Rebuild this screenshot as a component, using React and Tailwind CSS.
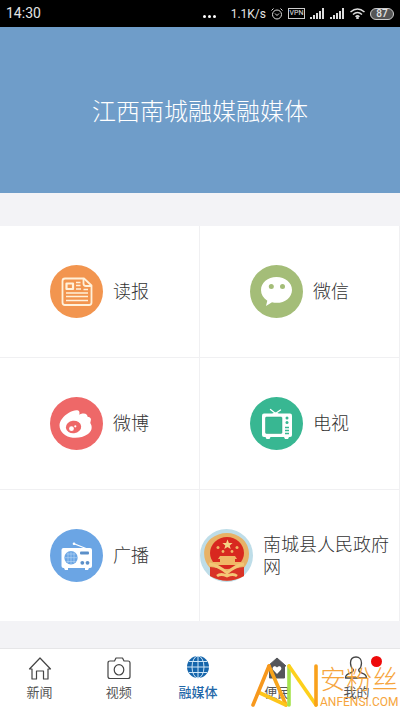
import React from 'react';

const fontStack = "font-[Roboto,'Noto_Sans_CJK_SC',sans-serif]";

function NewspaperIcon() {
  return (
    <svg viewBox="0 0 53 53" className="size-[53px] shrink-0" aria-hidden="true">
      <circle cx="26.5" cy="26.5" r="26.5" fill="#f2954f" />
      <g fill="none" stroke="#fff1da" strokeWidth="1.8" strokeLinejoin="round">
        <path d="M15 13.500h19l7.500 7v17q0 2.500-2.500 2.500H15q-2.500 0-2.500-2.500V16q0-2.500 2.500-2.500z" />
        <path d="M33.500 14v4.500q0 2.500 2.500 2.500h5.500" />
        <rect x="16.500" y="18.500" width="6.500" height="5.500" strokeWidth="2.200" />
        <path d="M26 17.500h4.500M26 20.500h4.500M26 24h5M33.500 24.500h4.500M16 28h22M16 31.500h22M16 35.500h22" strokeWidth="1.500" />
      </g>
    </svg>
  );
}

function WechatIcon() {
  return (
    <svg viewBox="0 0 53 53" className="size-[53px] shrink-0" aria-hidden="true">
      <circle cx="26.5" cy="26.5" r="26.5" fill="#a4bd78" />
      <path
        d="M26.500 12c-8.800 0-15.500 5.700-15.500 13 0 4.500 2.300 8.200 6.300 10.700l-1.300 5.300 6-3.800c1.500.4 3 .6 4.500.6 8.800 0 15.500-5.700 15.500-12.900S35.300 12 26.500 12z"
        fill="#fff"
      />
      <circle cx="21.300" cy="21.500" r="2.500" fill="#a4bd78" />
      <circle cx="32.500" cy="21.500" r="2.500" fill="#a4bd78" />
    </svg>
  );
}

function WeiboIcon() {
  return (
    <svg viewBox="0 0 53 53" className="size-[53px] shrink-0" aria-hidden="true">
      <circle cx="26.5" cy="26.5" r="26.5" fill="#ee6868" />
      <path
        d="M9.500 28.500c0-4.500 4-9.500 9-12.500 5-3 9.800-3.500 10.800-1.200.4 1 .3 2-.2 3 1.200-.8 3-1.500 4.700-1.300 2.300.2 3.700 1.500 3.800 3.300 3 .2 4 2 3 4.700-.3 1-.5 1.500.2 2.500 1.900 3.500.8 7.500-3.200 10.300-4 2.800-9.500 3.900-14.700 3.400C15.500 40 9.500 35 9.500 28.500z"
        fill="#fff"
      />
      <ellipse cx="23.500" cy="30" rx="7.700" ry="6.300" fill="#ee6868" transform="rotate(-6 23.500 30)" />
      <circle cx="21.500" cy="31.700" r="2.400" fill="#fff" />
      <circle cx="25.300" cy="29.300" r="1.100" fill="#fff" />
    </svg>
  );
}

function TvIcon() {
  return (
    <svg viewBox="0 0 53 53" className="size-[53px] shrink-0" aria-hidden="true">
      <circle cx="26.5" cy="26.5" r="26.5" fill="#38b792" />
      <path d="M20.500 12.500l5 4 5-3.500" fill="none" stroke="#fff" strokeWidth="1.300" strokeLinecap="round" />
      <path d="M22 17q3.500-3 7 0z" fill="#fff" />
      <rect x="12" y="16.500" width="30" height="23.500" rx="2" fill="#fff" />
      <path d="M15.500 40h5l-1 2h-3zM34 40h5l-1 2h-3z" fill="#fff" />
      <rect x="15.500" y="20" width="16.500" height="16.500" rx="1" fill="#38b792" stroke="#2a9c7b" strokeWidth="0.500" />
      <circle cx="37" cy="21" r="1.500" fill="#38b792" />
      <circle cx="37" cy="25.500" r="1.500" fill="#38b792" />
      <path d="M35 30.500h4M35 33.500h4M35 36.500h4" stroke="#38b792" strokeWidth="1.300" />
    </svg>
  );
}

function RadioIcon() {
  return (
    <svg viewBox="0 0 53 53" className="size-[53px] shrink-0" aria-hidden="true">
      <circle cx="26.5" cy="26.5" r="26.5" fill="#6ba5e4" />
      <path d="M23.500 14.500L36 19.500" stroke="#fff" strokeWidth="1.200" />
      <circle cx="24" cy="14.700" r="1.300" fill="#fff" />
      <rect x="11.500" y="19" width="30.500" height="20" rx="2" fill="#fff" />
      <path d="M14 39h4v2h-3zM35 39h4l-1 2h-3z" fill="#fff" />
      <circle cx="21" cy="28.700" r="6.700" fill="#6ba5e4" />
      <path d="M14.500 28.700h13M21 22.500v12.500M16.500 25h9M16.500 32.500h9M18 23.500v10.500M24 23.500v10.500" stroke="#b9d6f5" strokeWidth="0.600" />
      <rect x="30" y="22.500" width="9" height="3" rx="1" fill="#5b8fc9" />
      <circle cx="32.300" cy="33.800" r="1.900" fill="#5b8fc9" />
      <circle cx="37.500" cy="33.800" r="1.900" fill="#5b8fc9" />
    </svg>
  );
}

function EmblemIcon() {
  return (
    <svg viewBox="0 0 53 53" className="size-[53px] shrink-0" aria-hidden="true">
      <circle cx="26.5" cy="26.5" r="26.500" fill="#bedde8" />
      <path d="M10 47v-8C2 31 2 17 11 9.500 20 2 34 2 42 9.500c9 7.500 9 21.500 2 29.500v8q-17 9-34 0z" fill="#e8b266" />
      <ellipse cx="27" cy="24" rx="17" ry="16" fill="#d8281f" />
      <path d="M10 38q9 0 17 6 9-6 17-6v9q-17 9.500-34 0z" fill="#d93327" />
      <path d="M27.500 10.500l1.400 3.400 3.700.2-2.900 2.300 1 3.600-3.200-2-3.200 2 1-3.600-2.900-2.300 3.700-.2z" fill="#f5d486" />
      <g fill="#f0b766">
        <circle cx="18" cy="18.500" r="1.500" />
        <circle cx="37" cy="18.500" r="1.500" />
        <circle cx="23" cy="22.500" r="1.400" />
        <circle cx="32" cy="22.500" r="1.400" />
        <path d="M20 27h15l2 3h-2v3h7v3H13v-3h7v-3h-2z" />
      </g>
      <path d="M9 35q9 1 18 9 9-8 17-9M17 47q4-3 10 0 6-3 10 0" fill="none" stroke="#f3c676" strokeWidth="2.800" />
    </svg>
  );
}

function HomeIcon() {
  return (
    <svg viewBox="0 0 24 24" className="size-6" fill="none" stroke="#444" strokeWidth="1.200" strokeLinejoin="round" aria-hidden="true">
      <path d="M1.500 13L12 2l10.500 11H20v10h-4.500v-8h-7v8H4V13z" />
    </svg>
  );
}

function CameraIcon() {
  return (
    <svg viewBox="0 0 24 24" className="size-6" fill="none" stroke="#444" strokeWidth="1.200" strokeLinejoin="round" aria-hidden="true">
      <path d="M3 5h4.500L9 2h6.500L17 5h4q2 0 2 2v13.500q0 2-2 2H3q-2 0-2-2V7q0-2 2-2z" />
      <ellipse cx="12" cy="13.800" rx="4.800" ry="5.200" />
    </svg>
  );
}

function GlobeIcon() {
  return (
    <svg viewBox="0 0 24 24" className="size-6" aria-hidden="true">
      <circle cx="12" cy="11" r="11" fill="#1565ab" />
      <g fill="none" stroke="#cfe6f7" strokeWidth="1">
        <path d="M12 0v22M1 11h22M3 5.500h18M3 16.500h18" />
        <ellipse cx="12" cy="11" rx="6" ry="11" />
      </g>
    </svg>
  );
}

function ServiceIcon() {
  return (
    <svg viewBox="0 0 24 24" className="size-6" aria-hidden="true">
      <path d="M12 2l9 8h-1.500v12h-15V10H3z" fill="#54565a" stroke="#54565a" strokeLinejoin="round" />
      <path d="M12 18l-4-4.300c-1.500-2 1.500-5 4-2.200 2.500-2.800 5.500.2 4 2.200z" fill="#fff" />
    </svg>
  );
}

function UserIcon() {
  return (
    <svg viewBox="0 0 24 24" className="size-6" fill="none" stroke="#444" strokeWidth="1.300" strokeLinejoin="round" aria-hidden="true">
      <path d="M12 1C8.500 1 6.500 3.500 6.500 7c0 3 1.200 5.300 2.800 6.600.3 2-.8 2.700-3.300 3.600C3 18.300 1.500 19 1.500 22h21c0-3-1.500-3.700-4.500-4.800-2.500-.9-3.600-1.600-3.300-3.600C16.300 12.300 17.500 10 17.500 7c0-3.500-2-6-5.500-6z" />
    </svg>
  );
}

const services = [
  { label: '读报', Icon: NewspaperIcon },
  { label: '微信', Icon: WechatIcon },
  { label: '微博', Icon: WeiboIcon },
  { label: '电视', Icon: TvIcon },
  { label: '广播', Icon: RadioIcon },
  { label: '南城县人民政府网', Icon: EmblemIcon },
];

const tabs = [
  { label: '新闻', Icon: HomeIcon },
  { label: '视频', Icon: CameraIcon },
  { label: '融媒体', Icon: GlobeIcon, active: true },
  { label: '便民', Icon: ServiceIcon },
  { label: '我的', Icon: UserIcon, dot: true },
];

function Signal() {
  return (
    <svg viewBox="0 0 15 11" className="h-[11px] w-[15px]" fill="#ddd" aria-hidden="true">
      <path d="M0 9h2v2H0zM3 7h2v4H3zM6 5h2v6H6zM9 3h2v8H9zM12 0h2v11h-2z" />
    </svg>
  );
}

function StatusBar() {
  return (
    <header className="relative flex h-[27px] items-center justify-between bg-black px-[6px] text-[#e4e4e4]">
      <span className="text-[14px]">14:30</span>
      <span className="absolute top-[15px] left-[203px] flex gap-[2px]">
        <i className="size-[3px] rounded-full bg-white" />
        <i className="size-[3px] rounded-full bg-white" />
        <i className="size-[3px] rounded-full bg-white" />
      </span>
      <div className="flex items-center gap-[5px]">
        <span className="text-[12px]">1.1K/s</span>
        <svg viewBox="0 0 12 12" className="size-3" fill="none" stroke="#ddd" aria-hidden="true">
          <circle cx="6" cy="6.500" r="4.500" />
          <path d="M.5 2.500l2-2M11.500 2.500l-2-2M4 5.500l2 2 2-2" />
        </svg>
        <span className="flex h-[11px] w-[17px] items-center justify-center border border-[#ccc] text-[7px] leading-none">VPN</span>
        <Signal />
        <Signal />
        <svg viewBox="0 0 15 11" className="h-[11px] w-[15px]" fill="none" stroke="#ddd" strokeWidth="1.500" aria-hidden="true">
          <path d="M.5 4q7-6 14 0M3 6.500q4.500-4 9 0M5.500 8.700q2-1.700 4 0" />
          <circle cx="7.500" cy="10" r=".6" />
        </svg>
        <span className="flex h-3 w-6 items-center justify-center rounded-full border border-[#ccc] bg-[#555] text-[10px] leading-none font-medium">87</span>
      </div>
    </header>
  );
}

function Watermark() {
  return (
    <div className="pointer-events-none absolute right-0 bottom-0 flex items-end text-[#f6a53c]">
      <svg viewBox="0 0 70 48" className="h-12 w-[70px]" fill="none" strokeWidth="3.600" strokeLinecap="round" aria-hidden="true">
        <line x1="19" y1="3" x2="36" y2="42" stroke="#f9a51c" />
        <line x1="10" y1="30" x2="36" y2="42" stroke="#fdc51a" />
        <line x1="19" y1="3" x2="3" y2="42" stroke="#f7981d" />
        <line x1="39" y1="3" x2="39" y2="42" stroke="#a5e34c" />
        <line x1="39" y1="3" x2="66" y2="42" stroke="#fdd01c" />
        <line x1="66" y1="3" x2="66" y2="42" stroke="#f9a11b" />
      </svg>
      <div className="flex w-20 flex-col pb-[2px]">
        <span className="text-[26px] leading-[30px] font-light whitespace-nowrap">安粉丝</span>
        <span className="text-[12px] leading-[14px]">ANFENSI.COM</span>
      </div>
    </div>
  );
}

export default function App() {
  return (
    <div className={`flex min-h-screen flex-col bg-[#f3f3f6] ${fontStack}`}>
      <StatusBar />

      <div className="flex h-[166px] items-center justify-center bg-[#6f9dc9] pt-1">
        <h1 className="text-[24px] font-light text-white">江西南城融媒融媒体</h1>
      </div>

      <main className="mt-[33px] grid grid-cols-2 gap-y-px bg-[#f0f0f2]">
        {services.map(({ label, Icon }) => (
          <a key={label} href="#" className="flex h-[131px] items-center justify-center gap-[10px] border-r border-[#f0f0f2] bg-white text-[18px] leading-[22px] font-light text-[#333]">
            <Icon />
            <span>{label}</span>
          </a>
        ))}
      </main>

      <nav className="relative mt-auto grid h-[63px] grid-cols-5 border-t border-[#e6e6e8] bg-white pr-1">
        {tabs.map(({ label, Icon, active, dot }) => (
          <a
            key={label}
            href="#"
            className={`relative flex flex-col items-center gap-[3px] pt-[7px] text-[13px] leading-[20px] ${active ? 'font-medium text-[#1f67a8]' : 'text-[#555]'}`}
          >
            <Icon />
            <span>{label}</span>
            {dot && <i className="absolute top-[7px] right-[14px] size-[11px] rounded-full bg-[#ee0a0a]" />}
          </a>
        ))}
        <Watermark />
      </nav>
    </div>
  );
}
